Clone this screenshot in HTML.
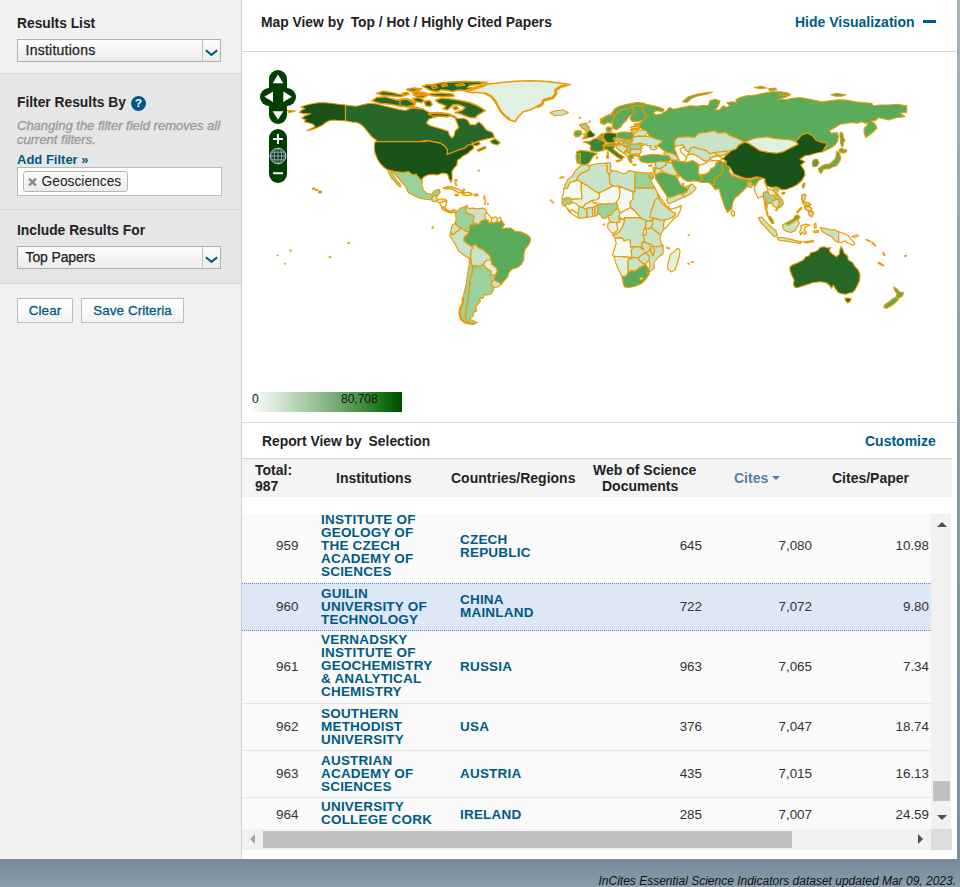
<!DOCTYPE html>
<html lang="en">
<head>
<meta charset="utf-8">
<title>InCites Essential Science Indicators</title>
<style>
html,body{margin:0;padding:0;}
body{width:960px;height:887px;overflow:hidden;position:relative;font-family:"Liberation Sans",Arial,sans-serif;font-size:14px;color:#222;
 background:linear-gradient(to bottom,#a8b3ba 0px,#8c9ba5 430px,#7b909e 858px,#76899a 861px,#8c9eaa 887px);}
.abs{position:absolute;}
#page{position:absolute;left:0;top:0;width:957px;height:859px;background:#fff;}
#side{position:absolute;left:0;top:0;width:242px;height:859px;background:#f1f1f1;border-right:1px solid #cfcfcf;box-sizing:border-box;z-index:2;}
.sec{position:absolute;left:0;width:241px;box-sizing:border-box;}
.h{position:absolute;left:17px;font-weight:bold;font-size:13.8px;color:#222;white-space:nowrap;}
.sel{position:absolute;left:17px;width:204px;height:23px;box-sizing:border-box;border:1px solid #b0b0b0;background:linear-gradient(#fdfdfd,#ececec);font-size:14px;line-height:21px;padding-left:7.5px;color:#222;letter-spacing:0.25px;-webkit-text-stroke:0.25px #222;}
.sel .arr{position:absolute;right:0;top:0;width:17px;height:21px;border-left:1px solid #c0c0c0;}
.btn{position:absolute;height:25px;box-sizing:border-box;border:1px solid #bdbdbd;background:linear-gradient(#ffffff,#f3f3f3);color:#005a84;font-size:13.4px;line-height:24px;text-align:center;-webkit-text-stroke:0.3px #005a84;letter-spacing:0.1px;}
a,.lnk{color:#005a84;text-decoration:none;}
#main{position:absolute;left:241px;top:0;width:716px;height:858px;background:#fff;}
.title{position:absolute;font-weight:bold;font-size:13.85px;color:#222;white-space:nowrap;}
.title span{margin-left:3px;}
.th{position:absolute;font-size:14px;color:#222;font-weight:bold;white-space:nowrap;line-height:16px;}
.row{position:absolute;left:1px;width:689px;background:#fafafa;border-bottom:1px solid #e6e6e6;box-sizing:border-box;}
.row.hl{background:#dde7f6;border-top:1px dotted #4f8fd0;border-bottom:1px dotted #4f8fd0;}
.num{position:absolute;font-size:13.4px;color:#333;white-space:nowrap;line-height:16px;}
.inst{position:absolute;left:80px;font-weight:bold;font-size:13.5px;line-height:13px;color:#005a84;white-space:nowrap;letter-spacing:0.2px;}
.ctry{position:absolute;left:219px;font-weight:bold;font-size:13.5px;line-height:13px;color:#005a84;white-space:nowrap;letter-spacing:0.2px;}
</style>
</head>
<body>
<div id="page">
 <div id="side">
  <div class="sec" style="top:0;height:74px;border-bottom:1px solid #d6d6d6;"></div>
  <div class="h" style="top:16px;">Results List</div>
  <div class="sel" style="top:39px;">Institutions<span class="arr"><svg width="17" height="21" viewBox="0 0 17 21" style="display:block"><path d="M2.8 10.2 L8.5 14.8 L14.2 10.2" fill="none" stroke="#005a84" stroke-width="2.1"/></svg></span></div>

  <div class="sec" style="top:74px;height:136px;background:#e6e6e6;border-bottom:1px solid #d4d4d4;"></div>
  <div class="h" style="top:95px;">Filter Results By</div>
  <div class="abs" style="left:131px;top:96px;width:15px;height:15px;border-radius:50%;background:#005a84;color:#fff;font-weight:bold;font-size:11.5px;line-height:15px;text-align:center;">?</div>
  <div class="abs" style="left:17px;top:119px;width:215px;font-style:italic;font-size:13px;line-height:14px;color:#9a9a9a;-webkit-text-stroke:0.35px #9a9a9a;">Changing the filter field removes all current filters.</div>
  <div class="abs lnk" style="left:17px;top:152px;font-weight:bold;font-size:13px;white-space:nowrap;">Add Filter »</div>
  <div class="abs" style="left:17px;top:167px;width:205px;height:29px;box-sizing:border-box;border:1px solid #b9b9b9;background:#fff;"></div>
  <div class="abs" style="left:23px;top:171px;width:105px;height:21px;box-sizing:border-box;border:1px solid #b5b5b5;border-radius:3px;background:linear-gradient(#fbfbfb,#ececec);font-size:13.8px;line-height:19px;color:#222;white-space:nowrap;"><span style="position:absolute;left:4px;top:0;color:#888;font-weight:bold;font-size:15px;-webkit-text-stroke:0.6px #888;">×</span><span style="position:absolute;left:17.5px;top:0;">Geosciences</span></div>

  <div class="sec" style="top:210px;height:74px;background:#e6e6e6;border-bottom:1px solid #d4d4d4;"></div>
  <div class="h" style="top:223px;">Include Results For</div>
  <div class="sel" style="top:246px;letter-spacing:-0.12px;">Top Papers<span class="arr"><svg width="17" height="21" viewBox="0 0 17 21" style="display:block"><path d="M2.8 10.2 L8.5 14.8 L14.2 10.2" fill="none" stroke="#005a84" stroke-width="2.1"/></svg></span></div>

  <div class="btn" style="left:17px;top:298px;width:56px;">Clear</div>
  <div class="btn" style="left:81px;top:298px;width:103px;">Save Criteria</div>
 </div>

 <div id="main">
  <div class="title" style="left:20px;top:14px;">Map View by <span>Top / Hot / Highly Cited Papers</span></div>
  <div class="abs lnk" style="left:554px;top:14px;font-weight:bold;font-size:14px;white-space:nowrap;">Hide Visualization</div>
  <div class="abs" style="left:682px;top:20px;width:13px;height:3px;background:#005a84;"></div>
  <div class="abs" style="left:1px;top:51px;width:715px;height:1px;background:#d4d4d4;"></div>

  <!-- MAP -->
  <div id="map" class="abs" style="left:0;top:52px;width:716px;height:370px;">
<svg width="716" height="370" viewBox="0 0 716 370" style="position:absolute;left:0;top:0;">
<g stroke="#ee9900" stroke-width="1.15" stroke-linejoin="round">
<path fill="#1a5319" d="M104.5 53.0 L97.3 52.2 L90.7 51.3 L84.8 50.8 L79.0 50.5 L74.0 51.3 L69.0 52.2 L64.8 53.3 L59.8 55.0 L64.0 56.7 L60.7 58.0 L58.2 60.5 L63.2 61.7 L69.8 61.7 L64.0 63.8 L60.7 66.3 L64.8 67.7 L63.2 69.7 L68.2 71.0 L72.3 72.2 L74.0 74.7 L69.8 76.7 L65.7 78.8 L70.7 77.7 L76.5 75.5 L81.5 73.0 L84.8 70.5 L88.2 68.8 L92.3 68.0 L97.3 68.5 L102.3 68.8 L104.5 68.8Z"/>
<path fill="#276727" d="M104.5 53.0 L109.8 53.7 L115.7 54.2 L122.3 52.5 L129.0 51.3 L135.7 52.0 L142.3 53.7 L149.0 55.3 L157.3 57.2 L164.0 58.5 L169.0 56.7 L175.7 55.0 L182.3 57.3 L166.5 55.5 L174.0 55.0 L181.5 56.8 L185.9 59.2 L190.2 61.1 L196.5 60.2 L202.8 61.1 L209.0 62.0 L214.0 64.5 L216.5 66.8 L222.1 66.1 L226.5 68.0 L229.0 72.4 L234.0 73.0 L237.8 69.9 L241.5 73.0 L245.2 78.0 L251.5 80.5 L253.4 85.5 L246.5 86.8 L239.0 88.6 L234.0 90.5 L230.2 90.9 L232.8 91.4 L237.8 89.9 L239.2 92.0 L235.2 94.0 L231.5 92.5 L227.1 93.0 L224.0 96.1 L217.8 98.0 L211.5 100.5 L205.9 102.4 L206.5 98.0 L204.0 94.2 L199.0 91.1 L192.8 89.9 L185.2 88.6 L179.0 89.2 L185.7 89.7 L136.5 89.3 L134.0 87.2 L130.7 84.7 L127.3 80.5 L124.0 76.3 L119.8 72.2 L115.7 70.5 L110.7 70.0 L104.5 68.8Z"/>
<path fill="#ffffff" d="M185.9 69.9 L188.4 66.8 L195.2 64.9 L201.5 63.0 L209.0 63.6 L214.0 66.1 L215.9 70.5 L217.8 75.5 L214.0 79.2 L213.4 83.0 L210.9 86.1 L208.4 83.0 L207.1 79.2 L201.5 77.4 L195.2 75.5 L189.0 73.6 L185.9 71.8Z"/>
<path fill="#276727" d="M249.0 89.2 L254.0 86.8 L259.0 90.5 L256.5 93.0 L251.5 91.8Z M235.9 98.0 L240.2 96.1 L244.0 94.5 L244.9 96.1 L237.8 99.2Z"/>
<path fill="#276727" stroke-width="1.45" d="M130.7 48.8 L135.7 45.5 L144.0 44.7 L149.0 46.3 L155.7 48.0 L165.7 47.2 L172.3 50.5 L173.2 53.3 L165.7 54.7 L157.3 53.8 L149.0 52.2 L139.0 51.3Z M135.7 41.3 L142.3 39.3 L150.7 40.5 L157.3 42.2 L165.7 43.0 L159.0 44.7 L149.0 43.8 L140.7 43.0Z M165.7 37.7 L172.3 36.0 L180.7 36.7 L177.3 38.8 L169.0 39.3Z M172.3 43.0 L180.7 41.3 L187.3 43.0 L182.3 45.5 L175.7 45.0Z M159.0 47.4 L164.0 46.5 L170.2 48.0 L174.6 51.1 L172.8 54.2 L166.5 55.2 L162.8 54.0 L159.0 54.5Z M171.5 46.5 L177.8 45.5 L182.8 47.8 L180.9 50.8 L174.6 49.5Z M183.4 49.2 L189.0 48.6 L191.2 52.4 L189.0 54.5 L184.6 53.6Z M166.5 36.8 L172.8 36.2 L177.8 37.8 L174.6 39.5 L167.8 38.8Z M161.5 41.1 L166.5 40.5 L167.8 42.4 L162.8 43.0Z M171.5 40.8 L179.0 40.0 L186.2 41.2 L183.4 43.2 L175.2 43.2Z"/>
<path fill="#276727" stroke-width="1.5" d="M181.5 34.2 L185.9 32.8 L191.5 33.0 L196.5 31.5 L202.8 30.5 L211.5 30.0 L224.0 29.5 L236.5 29.8 L246.5 30.5 L241.5 31.5 L239.0 32.5 L229.0 33.2 L226.5 35.5 L239.0 36.5 L234.0 38.0 L224.0 38.6 L217.8 38.0 L211.5 39.5 L206.5 38.5 L200.2 37.8 L196.5 39.5 L190.2 38.8 L186.5 36.8Z M187.8 41.8 L200.2 40.9 L211.5 42.0 L213.4 44.0 L201.5 44.5 L190.2 43.8Z M194.6 48.0 L200.2 46.2 L206.5 46.5 L212.8 47.5 L217.8 48.2 L224.0 49.5 L229.0 50.8 L235.2 53.2 L240.2 55.8 L244.2 58.6 L240.2 61.1 L235.9 63.6 L234.6 65.8 L229.0 65.5 L224.0 63.8 L219.0 61.8 L214.0 60.8 L217.8 59.2 L221.5 58.0 L224.0 55.5 L220.2 53.6 L215.2 52.4 L211.5 53.0 L209.0 55.5 L206.5 57.8 L202.1 57.0 L205.0 54.2 L201.5 52.4 L197.1 50.8Z M187.1 62.0 L191.5 60.9 L199.0 61.5 L206.5 62.0 L210.5 63.6 L206.5 64.8 L199.0 64.2 L191.5 63.9Z M211.5 55.5 L215.2 54.5 L217.8 56.5 L214.0 57.8Z"/>
<path fill="#276727" stroke-width="1.3" d="M200.2 33.0 L205.2 32.0 L206.5 33.6 L201.5 34.5Z M214.0 32.8 L221.5 31.5 L224.0 33.0 L216.5 34.2Z M190.2 34.9 L195.2 34.0 L196.5 35.8 L191.8 36.5Z"/>
<path fill="#e0f1df" stroke-width="1.6" d="M224.0 38.8 L235.7 34.7 L245.7 32.2 L260.7 30.5 L274.0 29.3 L289.0 28.8 L302.3 29.3 L314.0 30.5 L329.0 32.5 L319.0 34.7 L314.0 38.0 L314.8 41.3 L311.5 45.5 L302.3 48.0 L300.7 52.2 L295.7 54.7 L289.0 58.0 L282.3 59.7 L277.3 64.7 L274.0 69.7 L269.0 68.0 L264.8 64.7 L259.8 59.7 L256.5 53.8 L254.0 48.8 L249.8 43.8 L244.0 41.3 L235.7 40.5 L229.0 40.5Z"/>
<path fill="#c4e4cc" d="M309.0 60.5 L314.0 58.8 L322.3 58.0 L327.3 60.5 L322.3 63.0 L314.0 63.8Z"/>
<path fill="#1a5319" d="M134.0 89.7 L184.8 89.7 L185.2 88.6 L192.8 89.9 L199.0 91.1 L204.0 94.2 L206.5 98.0 L205.9 102.4 L211.5 100.5 L217.8 98.0 L224.0 96.1 L227.1 93.0 L231.5 92.5 L233.0 96.1 L229.0 99.2 L226.5 101.8 L221.5 104.2 L219.0 106.8 L216.5 108.0 L215.9 113.0 L213.0 116.1 L210.9 119.2 L211.0 123.0 L211.2 126.8 L210.0 130.5 L208.0 126.5 L206.8 122.4 L205.2 121.5 L201.5 121.1 L196.5 123.0 L191.5 122.4 L186.5 123.0 L182.8 124.9 L180.2 128.0 L181.5 128.0 L179.0 127.2 L174.8 122.2 L171.5 123.0 L167.3 119.7 L162.3 120.5 L154.0 119.7 L146.5 117.7 L143.2 115.5 L139.0 111.3 L136.5 107.2 L134.0 101.3 L133.2 94.7Z"/>
<path fill="#9bd19b" d="M150.7 118.7 L154.0 119.7 L162.3 120.5 L167.3 119.7 L171.5 123.0 L174.8 122.2 L179.0 127.2 L181.5 128.0 L180.7 133.0 L182.3 138.0 L185.7 141.3 L190.7 142.2 L193.2 138.8 L198.2 137.2 L199.3 140.5 L196.5 143.8 L194.8 146.7 L191.5 145.5 L190.7 148.0 L184.0 147.2 L179.0 146.3 L173.2 143.8 L167.3 140.5 L164.8 134.7 L159.0 128.0 L154.0 122.2Z M146.5 117.7 L149.8 118.5 L152.3 123.0 L155.7 128.0 L159.0 132.2 L159.8 135.0 L157.3 133.8 L154.0 129.7 L150.7 126.3 L148.2 121.7Z"/>
<path fill="#c7e3c8" stroke-width="1.3" d="M190.7 145.5 L192.8 143.8 L195.7 143.0 L195.5 146.3 L196.9 148.0 L194.0 149.8 L191.5 149.0Z"/>
<path fill="#e0f1df" stroke-width="1.3" d="M196.1 149.2 L196.9 148.0 L199.0 147.2 L204.0 147.2 L205.8 148.8 L201.5 149.7 L199.0 151.3 L197.3 150.3Z"/>
<path fill="#f3faf2" stroke-width="1.3" d="M199.0 151.3 L201.5 149.7 L205.8 149.0 L205.0 153.0 L203.8 155.7 L200.7 154.8 L199.4 152.6Z"/>
<path fill="#c7e3c8" stroke-width="1.5" d="M200.7 155.1 L203.8 155.9 L205.8 158.0 L209.0 159.2 L211.1 158.8 L213.2 157.8 L215.8 159.5 L214.7 161.3 L212.3 159.8 L210.2 160.9 L207.3 160.2 L204.0 158.6 L201.1 156.9Z"/>
<path fill="#f3faf2" stroke-width="1.5" d="M202.3 136.3 L206.5 134.7 L211.5 135.1 L215.7 136.8 L219.8 138.4 L222.5 139.7 L219.8 140.7 L216.5 140.2 L214.0 138.5 L210.7 136.8 L205.7 136.8Z M221.1 142.2 L224.0 140.5 L228.2 140.5 L231.2 142.2 L229.0 143.2 L225.7 143.5 L222.3 143.0Z M214.0 142.6 L216.9 142.5 L217.3 143.5 L214.4 143.5Z M233.2 142.6 L236.5 142.3 L236.9 143.4 L233.6 143.5Z"/>
<path fill="#f3faf2" stroke-width="1.2" d="M213.6 127.8 L216.1 127.8 L215.8 129.2 L213.8 129.2Z M214.0 130.9 L215.0 130.9 L215.7 133.4 L214.7 133.4Z M222.3 137.3 L223.6 137.3 L223.6 138.4 L222.3 138.4Z M242.8 144.2 L243.7 144.2 L243.7 145.2 L242.8 145.2Z M243.2 146.3 L244.0 146.3 L244.0 147.3 L243.2 147.3Z M244.0 148.8 L244.8 148.8 L244.8 149.8 L244.0 149.8Z M243.6 151.3 L244.5 151.3 L244.5 152.2 L243.6 152.2Z M246.5 151.3 L247.3 151.3 L247.3 152.2 L246.5 152.2Z M191.1 174.9 L192.2 174.9 L192.2 176.1 L191.1 176.1Z M237.3 118.4 L238.3 118.4 L238.3 119.0 L237.3 119.0Z"/>
<path fill="#9bd19b" d="M215.2 160.5 L219.6 156.1 L224.0 154.9 L225.9 153.6 L224.6 156.8 L225.9 161.1 L231.5 163.0 L233.4 164.9 L232.1 168.6 L232.8 173.0 L229.0 173.0 L228.4 179.2 L225.9 179.9 L223.4 178.0 L219.6 176.1 L215.2 173.0 L214.0 171.1 L215.2 166.8 L214.6 163.0Z"/>
<path fill="#c7e3c8" d="M225.9 153.6 L227.8 156.8 L231.5 156.1 L236.5 156.8 L241.5 156.1 L244.6 157.4 L245.9 160.5 L244.0 163.0 L244.6 167.4 L240.2 169.2 L237.1 173.0 L234.6 171.1 L232.8 173.0 L232.1 168.6 L233.4 164.9 L231.5 163.0 L225.9 161.1 L224.6 156.8Z"/>
<path fill="#f3faf2" d="M245.9 160.5 L248.4 163.6 L250.9 166.1 L250.2 169.9 L248.4 171.8 L247.1 168.6 L244.6 167.4 L244.0 163.0Z"/>
<path fill="#e0f1df" d="M250.9 166.1 L254.6 164.9 L256.5 166.8 L255.9 169.9 L252.1 171.1 L250.2 169.9Z"/>
<path fill="#f3faf2" d="M256.5 166.8 L259.0 165.2 L260.5 168.0 L258.4 170.5 L255.9 169.9Z"/>
<path fill="#c7e3c8" d="M210.9 173.6 L214.0 171.1 L215.2 173.0 L219.6 176.1 L217.8 178.6 L214.6 180.5 L212.1 183.0 L209.6 180.5Z"/>
<path fill="#c7e3c8" d="M209.6 180.5 L212.1 183.0 L214.6 180.5 L217.8 178.6 L219.6 176.1 L223.4 178.0 L225.9 179.9 L228.4 179.2 L227.1 181.8 L223.4 184.9 L222.8 188.6 L226.5 191.8 L230.2 194.2 L232.1 195.5 L230.2 198.0 L229.6 205.5 L227.8 206.1 L222.8 203.0 L217.8 199.2 L214.6 193.0 L211.5 188.0 L209.0 183.6Z"/>
<path fill="#c7e3c8" d="M230.2 194.2 L234.6 192.4 L237.1 195.5 L242.8 198.0 L245.9 201.1 L249.0 203.6 L250.2 208.0 L245.2 208.6 L242.1 212.4 L239.0 214.2 L234.0 213.6 L232.1 215.5 L230.2 211.1 L229.6 205.5 L230.2 198.0 L232.1 195.5Z"/>
<path fill="#e0f1df" d="M242.1 212.4 L245.2 208.6 L250.2 208.0 L250.9 212.4 L255.2 215.5 L256.5 219.2 L254.6 223.0 L249.6 223.0 L250.2 219.2 L245.9 216.8Z"/>
<path fill="#5aab5a" d="M237.1 173.0 L240.2 169.2 L244.6 167.4 L247.1 168.6 L248.4 171.8 L250.2 169.9 L252.1 171.1 L255.9 169.9 L258.4 170.5 L260.5 168.0 L261.5 169.9 L263.4 172.4 L260.9 176.8 L265.2 176.1 L270.2 176.1 L274.0 179.2 L280.2 179.9 L286.5 183.0 L289.6 186.1 L289.0 190.5 L286.5 194.2 L284.0 197.4 L282.8 203.0 L282.8 208.0 L280.2 212.4 L276.5 215.5 L271.5 216.8 L267.8 220.5 L266.5 224.9 L262.8 229.2 L260.2 232.4 L257.8 230.5 L252.8 228.0 L254.6 223.0 L256.5 219.2 L255.2 215.5 L250.9 212.4 L250.2 208.0 L249.0 203.6 L245.9 201.1 L242.8 198.0 L237.1 195.5 L234.6 192.4 L230.2 194.2 L226.5 191.8 L222.8 188.6 L223.4 184.9 L227.1 181.8 L228.4 179.2 L229.0 173.0 L232.8 173.0 L234.6 171.1Z"/>
<path fill="#c7e3c8" d="M252.8 228.0 L257.8 230.5 L260.2 232.4 L257.1 234.9 L252.8 235.5 L250.2 232.4 L250.9 229.2Z"/>
<path fill="#9bd19b" d="M232.1 215.5 L234.0 213.6 L239.0 214.2 L242.1 212.4 L245.9 216.8 L250.2 219.2 L249.6 223.0 L254.6 223.0 L252.8 228.0 L250.9 229.2 L250.2 232.4 L252.8 235.5 L252.1 238.6 L250.2 241.8 L246.5 243.0 L242.8 243.0 L242.1 246.1 L237.8 246.8 L239.6 249.2 L236.5 252.4 L234.6 255.5 L235.9 258.6 L232.8 260.5 L232.1 264.2 L229.0 265.5 L230.2 268.0 L236.5 270.5 L232.8 272.0 L228.4 271.1 L225.9 268.6 L224.0 264.2 L225.2 259.2 L225.9 253.0 L227.1 246.8 L227.8 240.5 L228.4 234.2 L229.0 228.0 L230.9 221.8 L231.5 218.0Z"/>
<path fill="#9bd19b" d="M229.6 205.5 L230.2 210.5 L232.1 215.5 L231.5 218.0 L230.9 221.8 L229.0 228.0 L228.4 234.2 L227.8 240.5 L227.1 246.8 L225.9 253.0 L225.2 259.2 L224.0 264.2 L225.9 268.6 L228.4 271.1 L224.0 270.5 L220.2 267.4 L218.4 261.8 L219.0 256.8 L221.5 251.8 L222.1 245.5 L223.4 239.2 L225.2 233.0 L225.9 226.8 L227.1 219.2 L228.4 211.8 L228.4 205.5Z"/>
<path fill="#c7e3c8" d="M340.9 112.4 L337.8 115.5 L334.0 119.2 L331.5 123.6 L327.1 127.4 L324.6 131.8 L322.8 136.8 L326.5 136.1 L329.0 130.5 L335.9 128.6 L336.5 124.9 L339.6 121.8 L344.0 119.9 L347.8 118.0 L348.4 113.6 L345.2 112.8Z"/>
<path fill="#f3faf2" d="M322.8 137.0 L326.5 136.2 L329.2 130.2 L335.9 128.8 L336.2 127.8 L340.5 130.8 L340.2 135.5 L341.0 146.8 L330.2 147.4 L327.8 145.5 L324.6 146.1 L321.5 148.0 L320.9 145.5 L322.5 141.8Z"/>
<path fill="#c7e3c8" d="M348.4 113.6 L355.2 111.8 L365.2 111.1 L366.5 115.5 L365.9 119.2 L368.4 123.0 L369.0 131.8 L372.1 134.2 L358.4 141.1 L355.2 139.9 L345.9 133.6 L336.2 127.8 L336.5 124.9 L339.6 121.8 L344.0 119.9 L347.8 118.0Z"/>
<path fill="#c7e3c8" d="M365.2 111.1 L369.0 110.5 L370.2 114.2 L369.0 116.8 L370.5 118.6 L368.4 123.0 L365.9 119.2 L366.5 115.5Z"/>
<path fill="#c7e3c8" d="M370.5 118.6 L376.5 119.2 L381.5 121.8 L385.2 121.1 L387.8 118.6 L394.0 119.9 L394.0 139.9 L392.1 139.9 L377.8 134.2 L372.1 134.2 L369.0 131.8 L368.4 123.0Z"/>
<path fill="#9bd19b" d="M394.0 119.9 L400.2 120.5 L406.5 121.1 L410.9 120.5 L412.8 124.9 L410.9 127.4 L409.0 123.6 L407.8 123.0 L410.2 129.2 L414.0 136.1 L394.6 136.1 L394.0 136.1Z"/>
<path fill="#e0f1df" d="M340.5 130.8 L345.9 133.6 L355.2 139.9 L358.4 141.1 L358.4 146.1 L355.2 148.0 L350.2 148.6 L347.8 150.5 L344.6 151.8 L342.1 155.5 L338.4 154.9 L335.2 151.8 L330.9 150.5 L330.2 147.4 L341.0 146.8 L340.2 135.5Z"/>
<path fill="#f3faf2" d="M358.4 141.1 L372.1 134.2 L377.8 134.2 L379.0 139.2 L378.4 145.5 L375.2 150.5 L372.8 151.8 L367.8 151.8 L362.8 152.4 L358.4 151.8 L357.1 153.0 L355.2 150.5 L352.8 151.1 L350.2 148.6 L355.2 148.0 L358.4 146.1Z"/>
<path fill="#f3faf2" d="M377.8 134.2 L392.1 139.9 L392.1 146.8 L389.0 150.5 L389.6 155.5 L385.2 158.0 L379.0 161.1 L377.1 156.8 L376.5 153.0 L375.2 150.5 L378.4 145.5 L379.0 139.2Z"/>
<path fill="#c7e3c8" d="M394.0 136.1 L414.0 136.1 L416.5 141.1 L417.8 145.5 L414.0 148.0 L412.8 153.0 L410.2 159.2 L412.1 164.9 L410.9 169.0 L405.2 168.8 L404.0 168.0 L400.2 166.1 L396.5 162.4 L394.0 159.2 L389.6 155.5 L389.0 150.5 L392.1 146.8 L392.1 139.9 L394.0 139.9Z"/>
<path fill="#9bd19b" stroke-width="1.27" d="M321.5 148.0 L324.6 146.1 L327.8 145.5 L330.2 147.4 L330.9 150.5 L329.0 152.0 L324.6 152.4 L324.6 154.2 L322.1 153.6 L320.9 150.5Z"/>
<path fill="#f3faf2" d="M324.6 154.2 L324.6 152.4 L329.0 152.0 L330.9 150.5 L335.2 151.8 L338.4 154.9 L337.8 158.0 L337.1 161.8 L334.6 160.5 L331.5 158.0 L329.0 159.2 L326.5 156.8Z"/>
<path fill="#ffffff" d="M326.5 156.8 L329.0 159.2 L331.5 158.0 L334.6 160.5 L337.1 161.8 L337.8 166.1 L334.6 164.2 L330.9 161.8 L327.8 159.2Z"/>
<path fill="#c7e3c8" d="M337.8 158.0 L338.4 154.9 L342.1 155.5 L345.2 157.4 L346.2 160.5 L345.9 165.1 L340.9 166.1 L337.8 166.1 L337.1 161.8Z"/>
<path fill="#e0f1df" d="M342.1 155.5 L344.6 151.8 L347.8 150.5 L350.2 148.6 L352.8 151.1 L355.2 150.5 L357.1 153.0 L354.0 154.9 L351.5 155.5 L346.5 156.1 L345.2 157.4Z"/>
<path fill="#c7e3c8" d="M345.2 157.4 L346.5 156.1 L351.5 155.5 L351.9 164.2 L346.2 165.5 L346.2 160.5Z"/>
<path fill="#e0f1df" d="M351.5 155.5 L354.0 154.9 L353.8 164.0 L351.9 164.2Z"/>
<path fill="#c7e3c8" d="M354.0 154.9 L357.1 153.0 L356.5 161.8 L355.9 163.6 L353.8 164.0Z"/>
<path fill="#9bd19b" d="M357.1 153.0 L358.4 151.8 L362.8 152.4 L367.8 151.8 L372.8 151.8 L375.2 150.5 L376.5 153.0 L375.9 156.8 L372.8 159.2 L370.2 163.0 L367.1 163.6 L365.2 166.1 L361.5 166.1 L359.6 163.0 L356.5 161.8Z"/>
<path fill="#c7e3c8" d="M372.8 159.2 L375.9 156.8 L377.1 156.8 L379.0 161.1 L377.8 165.5 L379.0 169.9 L374.0 170.5 L369.0 169.9 L367.8 167.4 L367.1 163.6 L370.2 163.0Z"/>
<path fill="#f3faf2" d="M379.0 161.1 L385.2 158.0 L389.6 155.5 L394.0 159.2 L396.5 162.4 L400.2 166.1 L394.0 165.5 L389.0 166.1 L384.0 165.5 L381.5 168.0 L379.0 169.9 L377.8 165.5Z"/>
<path fill="#e0f1df" d="M366.5 175.5 L367.1 171.1 L369.6 170.5 L375.9 170.5 L376.8 178.0 L372.8 181.1 L370.2 180.5Z"/>
<path fill="#f3faf2" d="M375.9 170.5 L379.0 169.9 L379.0 165.5 L381.5 168.0 L384.0 165.5 L383.4 169.2 L382.1 173.0 L379.0 179.2 L374.0 182.4 L371.5 183.0 L372.8 181.1 L376.8 178.0Z"/>
<path fill="#c7e3c8" d="M384.0 165.5 L389.0 166.1 L394.0 165.5 L400.2 166.1 L404.0 168.0 L405.2 168.6 L404.6 174.2 L402.8 178.0 L402.1 183.0 L403.4 188.0 L400.9 191.1 L401.5 195.5 L403.4 198.0 L400.2 196.8 L399.6 194.9 L392.8 194.9 L389.6 195.5 L389.0 188.0 L385.2 188.0 L383.4 189.2 L380.9 186.1 L374.0 186.1 L371.5 183.0 L374.0 182.4 L379.0 179.2 L382.1 173.0 L383.4 169.2Z"/>
<path fill="#f3faf2" d="M374.0 186.1 L380.9 186.1 L383.4 189.2 L385.2 188.0 L389.0 188.0 L389.6 195.5 L392.8 194.9 L390.2 198.0 L390.9 205.5 L384.0 204.9 L372.8 204.2 L371.5 203.0 L373.4 196.8 L375.2 191.8Z"/>
<path fill="#c7e3c8" d="M390.2 198.0 L392.8 194.9 L399.6 194.9 L400.2 196.8 L403.4 198.0 L401.5 195.5 L400.9 191.1 L403.4 189.9 L407.8 191.8 L409.6 195.5 L407.8 199.2 L404.0 201.1 L400.9 203.0 L397.1 206.1 L391.5 205.5 L390.9 205.5Z"/>
<path fill="#c7e3c8" d="M405.2 168.6 L410.9 169.2 L412.1 171.8 L410.2 175.5 L407.8 176.8 L404.6 176.1 L404.6 174.2Z"/>
<path fill="#f3faf2" d="M402.8 178.0 L404.6 176.1 L405.5 179.2 L405.0 183.0 L403.0 183.0 L402.1 183.0Z"/>
<path fill="#c7e3c8" d="M410.9 169.2 L414.0 166.1 L419.0 168.0 L424.0 168.0 L422.5 171.8 L422.8 176.8 L419.6 183.0 L411.5 176.8 L410.2 175.5 L412.1 171.8Z"/>
<path fill="#c7e3c8" d="M404.6 176.1 L407.8 176.8 L410.2 175.5 L411.5 176.8 L419.6 183.0 L419.0 186.8 L420.2 191.1 L422.1 193.6 L416.5 194.9 L412.1 194.2 L409.6 191.8 L407.8 191.8 L403.4 189.9 L403.4 188.0 L402.1 183.0 L405.0 183.0 L405.5 179.2Z"/>
<path fill="#c7e3c8" d="M414.0 148.0 L417.8 145.5 L420.2 150.5 L424.0 153.6 L426.5 156.1 L425.9 155.5 L428.4 157.4 L430.2 159.2 L435.2 161.8 L431.5 165.5 L424.0 168.0 L419.0 168.0 L414.0 166.1 L408.8 165.5 L410.2 159.2 L412.8 153.0Z"/>
<path fill="#f3faf2" d="M416.5 141.1 L420.2 146.8 L424.0 151.8 L425.9 155.5 L427.8 154.0 L428.6 157.4 L425.9 155.8 L424.0 153.6 L420.2 150.5 L417.8 145.5Z"/>
<path fill="#f3faf2" d="M428.6 157.4 L434.0 156.1 L440.2 153.6 L439.6 158.0 L436.5 164.2 L434.0 165.5 L429.0 171.1 L424.0 176.8 L422.8 176.8 L422.5 171.8 L424.0 168.0 L431.5 165.5 L435.2 161.8 L430.2 159.2Z"/>
<path fill="#c7e3c8" d="M416.5 194.9 L422.1 193.6 L422.1 201.8 L416.5 206.1 L412.8 210.5 L413.4 216.1 L409.0 219.2 L407.8 218.0 L409.0 213.0 L407.8 208.0 L408.4 204.2 L404.0 201.1 L407.8 199.2 L409.6 195.5 L410.2 200.5 L412.1 203.6 L413.4 199.2 L412.1 194.2Z"/>
<path fill="#c7e3c8" d="M409.6 195.5 L410.9 193.6 L412.1 194.2 L413.4 199.2 L412.1 203.6 L410.2 200.5Z"/>
<path fill="#c7e3c8" d="M397.1 206.1 L400.9 203.0 L404.0 201.1 L408.4 204.2 L407.8 208.0 L404.6 212.4 L401.5 211.1 L399.0 209.2Z"/>
<path fill="#c7e3c8" d="M387.1 207.4 L391.5 205.5 L397.1 206.1 L399.0 209.2 L401.5 211.1 L404.6 212.4 L401.5 214.2 L397.8 216.1 L394.0 219.2 L390.2 218.6 L387.1 220.5 L386.8 211.8Z"/>
<path fill="#e0f1df" d="M372.8 204.2 L384.0 204.9 L390.9 205.5 L391.5 205.5 L387.1 207.4 L386.8 211.8 L387.1 220.5 L385.2 224.2 L380.9 224.2 L377.1 216.8 L374.6 210.5Z"/>
<path fill="#5aab5a" d="M380.9 224.2 L385.2 224.2 L387.1 220.5 L390.2 218.6 L394.0 219.2 L397.8 216.1 L401.5 214.2 L404.6 212.4 L406.5 215.5 L407.8 218.0 L409.0 219.2 L407.8 223.0 L404.0 228.0 L400.2 231.8 L394.0 234.2 L387.8 235.5 L383.4 234.9 L382.1 230.5Z"/>
<path fill="#ffffff" stroke-width="1.23" d="M398.8 226.1 L400.5 225.0 L402.2 226.1 L401.2 227.8 L399.2 227.8Z M405.8 220.5 L407.0 220.0 L407.5 221.5 L406.2 222.2Z"/>
<path fill="#e0f1df" d="M436.5 196.1 L439.0 198.0 L438.4 204.2 L436.5 210.5 L434.0 218.0 L430.2 219.9 L427.1 217.4 L426.5 213.0 L428.4 206.8 L429.0 203.0 L432.8 199.9Z"/>
<path fill="#5aab5a" stroke-width="1.23" d="M359.7 67.2 L364.4 64.6 L370.7 62.0 L373.8 56.8 L379.0 54.1 L387.3 52.1 L395.7 50.5 L401.9 51.0 L406.1 52.6 L401.9 53.6 L395.7 53.6 L391.5 54.7 L387.3 56.2 L381.1 57.8 L376.9 60.4 L373.8 63.0 L372.2 68.2 L370.1 71.3 L366.5 70.3 L363.4 72.4 L360.2 71.3Z"/>
<path fill="#5aab5a" stroke-width="1.18" d="M373.8 63.0 L376.9 60.4 L381.1 57.8 L387.3 56.2 L391.5 54.7 L393.6 58.8 L393.8 61.1 L388.2 64.0 L385.7 68.0 L381.6 71.9 L380.0 74.7 L375.9 77.6 L371.9 76.5 L371.2 73.4 L371.2 71.3 L372.2 68.2Z"/>
<path fill="#5aab5a" stroke-width="1.18" d="M391.5 54.7 L395.7 53.6 L401.9 53.6 L400.9 56.2 L403.5 60.9 L406.1 65.1 L401.9 68.4 L395.7 69.5 L391.0 69.2 L388.9 66.6 L390.7 63.0 L393.8 60.9 L392.8 58.8Z"/>
<path fill="#9bd19b" stroke-width="1.23" d="M338.2 65.6 L339.2 65.3 L339.4 66.3 L338.4 66.5Z M348.3 69.2 L349.0 68.9 L349.1 70.3 L348.4 70.3Z"/>
<path fill="#5aab5a" stroke-width="1.27" d="M365.1 76.9 L367.2 74.8 L369.8 75.4 L371.0 77.9 L369.1 79.4 L366.0 79.4Z"/>
<path fill="#5aab5a" stroke-width="1.36" d="M332.9 82.2 L333.8 79.4 L337.2 78.5 L340.4 79.4 L340.7 81.9 L338.5 84.1 L334.8 84.8Z"/>
<path fill="#9bd19b" stroke-width="1.54" d="M338.5 72.9 L341.6 71.9 L346.0 71.3 L345.7 73.5 L347.9 74.8 L347.6 77.2 L349.1 78.5 L347.2 80.1 L345.1 79.4 L343.5 77.2 L341.6 76.6 L340.4 74.8Z"/>
<path fill="#9bd19b" stroke-width="1.36" d="M342.9 81.6 L345.7 81.3 L346.0 84.1 L343.2 84.4Z"/>
<path fill="#276727" stroke-width="1.0" d="M346.9 79.8 L349.1 78.2 L351.3 80.4 L354.0 82.4 L352.6 84.8 L349.1 85.5 L345.4 86.1 L341.3 86.9 L342.1 85.5 L345.8 84.8 L345.9 81.9Z"/>
<path fill="#38883a" stroke-width="1.18" d="M342.6 90.1 L345.4 89.4 L347.9 89.8 L349.8 88.8 L351.6 87.6 L354.1 86.6 L356.0 86.0 L358.5 87.6 L361.6 88.8 L364.8 90.1 L363.5 91.6 L361.9 93.2 L362.9 95.1 L362.2 97.2 L363.5 98.5 L360.4 98.8 L356.6 99.8 L352.9 99.4 L349.8 98.5 L349.1 96.6 L349.8 94.1 L347.9 92.2 L345.4 91.0Z"/>
<path fill="#5aab5a" stroke-width="1.3" d="M358.5 83.4 L361.0 81.6 L362.9 81.9 L362.4 84.8 L360.4 85.1Z M356.0 85.9 L358.5 84.1 L360.4 85.1 L362.4 84.8 L363.2 86.9 L361.0 87.6 L358.5 87.6Z M363.2 86.9 L364.8 90.1 L362.6 89.2 L361.6 87.9Z"/>
<path fill="#276727" stroke-width="1.18" d="M362.9 81.9 L364.8 81.0 L368.5 80.4 L371.6 81.0 L374.8 81.3 L375.7 83.5 L375.4 85.4 L372.2 86.6 L374.1 88.8 L372.9 90.7 L369.8 91.0 L366.6 90.7 L365.7 89.8 L364.8 90.1 L363.5 87.2 L362.2 84.8Z"/>
<path fill="#5aab5a" stroke-width="1.45" d="M362.6 92.9 L364.8 91.9 L367.2 92.2 L366.9 93.8 L364.1 94.1Z"/>
<path fill="#5aab5a" stroke-width="1.36" d="M367.2 92.2 L369.8 91.0 L372.9 90.7 L376.0 91.6 L378.5 90.1 L379.8 91.6 L377.9 92.9 L374.8 93.0 L372.2 94.1 L369.1 94.1 L366.9 93.8Z"/>
<path fill="#38883a" stroke-width="1.18" d="M362.6 95.2 L364.1 94.0 L366.9 93.6 L369.1 93.9 L372.6 93.9 L373.5 95.4 L371.9 96.6 L373.8 98.4 L376.3 100.4 L378.8 102.2 L381.0 103.8 L383.5 105.2 L381.3 106.3 L380.7 108.5 L378.8 106.6 L376.1 104.9 L373.5 103.0 L371.0 101.1 L368.5 99.2 L366.0 97.6 L363.5 97.1Z"/>
<path fill="#38883a" stroke-width="1.23" d="M365.7 103.5 L367.2 103.2 L367.6 106.0 L366.0 106.3Z M366.3 100.1 L367.2 99.8 L367.4 102.2 L366.4 102.2Z M375.1 108.5 L378.5 108.0 L379.1 109.1 L376.3 109.8Z"/>
<path fill="#38883a" stroke-width="1.18" d="M335.7 99.8 L339.1 98.5 L343.5 98.8 L347.2 99.4 L350.4 100.1 L354.8 101.3 L356.0 101.9 L352.9 103.5 L351.0 106.0 L349.8 108.5 L347.9 111.0 L345.4 112.6 L341.0 112.9 L339.1 111.6 L338.8 109.1 L339.4 104.8 L339.1 101.6 L335.4 101.9Z"/>
<path fill="#5aab5a" stroke-width="1.27" d="M335.4 101.9 L339.1 101.6 L339.4 104.8 L338.8 109.1 L339.1 111.6 L336.3 111.3 L335.1 106.0Z"/>
<path fill="#38883a" stroke-width="1.27" d="M355.4 105.1 L356.6 104.9 L356.8 106.0 L355.5 106.1Z"/>
<path fill="#5aab5a" stroke-width="1.18" d="M375.7 81.6 L376.9 81.0 L380.4 80.1 L385.4 80.1 L391.0 80.7 L392.2 82.9 L391.9 86.0 L389.8 87.6 L386.0 87.6 L382.2 86.9 L377.9 86.0 L375.4 85.4Z"/>
<path fill="#8fd2ae" stroke-width="1.27" d="M373.8 87.6 L375.4 85.4 L377.9 86.0 L382.2 86.9 L382.9 88.5 L381.6 89.2 L378.5 89.2 L374.8 89.0Z"/>
<path fill="#8fd2ae" stroke-width="1.27" d="M382.2 90.1 L382.9 88.5 L386.0 87.6 L389.8 87.6 L389.8 89.4 L389.1 91.0 L384.8 90.7Z"/>
<path fill="#8fd2ae" stroke-width="1.27" d="M380.4 92.6 L382.2 90.1 L384.8 90.7 L389.1 91.0 L389.8 92.2 L388.2 94.1 L386.6 94.0 L382.9 94.2Z"/>
<path fill="#c3e7d2" stroke-width="1.45" d="M374.8 93.0 L377.9 92.9 L380.4 92.6 L382.9 94.2 L385.4 95.1 L386.3 97.9 L384.4 99.1 L383.5 101.6 L380.4 99.8 L377.2 97.2 L375.4 95.4Z"/>
<path fill="#8fd2ae" stroke-width="1.36" d="M385.4 95.1 L386.6 94.0 L388.2 94.1 L389.8 97.9 L389.2 100.7 L387.4 100.5 L384.4 99.1 L386.3 97.9Z"/>
<path fill="#c3e7d2" stroke-width="1.45" d="M384.4 99.1 L387.4 100.5 L389.2 100.7 L389.8 102.6 L387.2 104.8 L385.4 103.5 L383.5 101.6Z"/>
<path fill="#8fd2ae" stroke-width="1.23" d="M388.2 94.1 L389.8 92.2 L394.8 92.2 L398.5 91.9 L400.4 93.5 L401.0 96.6 L398.5 97.2 L394.8 97.6 L391.0 97.2 L389.8 97.9Z"/>
<path fill="#ffffff" stroke-width="1.36" d="M398.5 91.0 L401.6 91.6 L401.9 93.5 L400.4 93.5 L398.5 91.9Z"/>
<path fill="#c3e7d2" stroke-width="1.23" d="M389.8 97.9 L391.0 97.2 L394.8 97.6 L398.5 97.2 L400.4 99.1 L399.1 101.3 L394.8 102.1 L389.8 102.6 L389.2 100.7Z"/>
<path fill="#5aab5a" stroke-width="1.36" d="M387.2 104.8 L389.8 102.6 L394.8 102.1 L396.0 103.5 L392.2 104.1 L392.6 106.0 L389.8 106.6 L391.0 109.8 L390.4 111.0 L388.5 109.8 L387.4 107.2Z"/>
<path fill="#5aab5a" stroke-width="1.27" d="M391.6 112.6 L394.1 112.2 L395.1 113.0 L392.2 113.2Z"/>
<path fill="#8fd2ae" stroke-width="1.36" d="M393.5 71.9 L398.5 71.3 L398.9 73.0 L394.1 73.4Z"/>
<path fill="#c3e7d2" stroke-width="1.36" d="M389.4 75.1 L394.8 74.1 L398.8 75.1 L398.5 76.8 L391.6 76.5Z"/>
<path fill="#c3e7d2" stroke-width="1.36" d="M389.8 77.6 L396.0 77.2 L396.8 79.4 L393.5 81.6 L391.6 79.9Z"/>
<path fill="#c3e7d2" stroke-width="1.23" d="M393.5 81.6 L397.2 78.5 L402.2 77.9 L405.1 78.5 L406.8 81.0 L405.1 82.6 L403.5 84.4 L397.9 84.1 L392.9 84.8 L392.2 82.9Z"/>
<path fill="#c3e7d2" stroke-width="1.18" d="M391.3 90.1 L391.9 86.0 L392.9 84.8 L397.9 84.1 L403.5 84.4 L408.5 84.1 L411.6 85.4 L416.0 87.2 L421.0 88.2 L420.4 90.7 L417.9 92.2 L417.1 94.0 L414.8 93.7 L414.0 95.2 L416.1 95.9 L415.8 97.2 L412.4 98.0 L409.9 97.0 L408.6 95.4 L409.9 94.1 L407.9 93.5 L406.0 93.9 L404.8 91.9 L401.9 93.5 L401.6 91.6 L398.5 91.0 L394.8 92.2 L389.8 92.2 L389.8 89.4 L389.8 87.6Z"/>
<path fill="#5aab5a" d="M406.0 52.5 L409.0 53.0 L417.3 55.0 L423.2 57.2 L421.5 59.7 L415.7 58.8 L412.3 60.5 L414.8 63.0 L420.7 61.7 L425.7 58.8 L428.2 55.5 L432.3 57.2 L440.7 55.5 L449.0 53.8 L455.7 54.3 L462.3 53.3 L467.3 53.8 L469.0 48.8 L474.0 47.2 L479.0 48.8 L477.3 53.8 L474.0 58.0 L478.2 58.0 L482.3 53.8 L485.7 55.5 L489.0 53.8 L485.7 50.5 L492.3 49.7 L495.7 51.3 L494.8 48.0 L499.0 45.5 L505.7 43.8 L514.0 43.0 L522.3 41.3 L530.7 39.7 L540.7 39.7 L549.0 43.0 L544.0 45.5 L535.7 47.7 L545.7 47.2 L552.3 46.3 L559.0 45.5 L572.3 48.0 L580.7 49.7 L589.0 48.8 L597.3 47.7 L605.7 48.0 L614.0 49.7 L622.3 50.5 L630.7 51.3 L632.3 53.8 L639.0 53.0 L647.3 53.0 L655.7 52.2 L665.7 53.8 L665.7 60.5 L659.0 61.0 L664.0 64.7 L655.7 65.5 L647.3 68.0 L640.7 66.3 L637.3 65.5 L634.0 68.8 L629.8 68.0 L632.3 70.5 L634.8 73.0 L635.7 76.3 L632.3 79.7 L627.3 83.8 L624.8 85.5 L623.2 81.3 L623.2 76.3 L625.7 73.8 L627.3 70.5 L624.0 71.3 L620.7 69.7 L615.7 71.3 L612.3 70.5 L605.7 71.3 L599.0 72.2 L594.0 75.5 L588.2 78.8 L590.7 81.3 L596.5 80.5 L597.3 84.7 L596.5 89.7 L594.0 93.0 L589.0 96.3 L584.0 98.8 L581.5 99.7 L584.0 95.5 L586.5 91.3 L580.7 90.5 L574.8 88.0 L571.5 83.8 L566.5 81.3 L560.7 83.0 L554.8 89.7 L549.0 87.7 L540.7 87.2 L532.3 86.3 L525.7 84.7 L522.3 85.5 L514.0 86.3 L505.7 89.3 L504.0 90.0 L500.7 88.8 L495.7 86.3 L489.0 83.8 L484.8 80.5 L477.3 81.3 L473.2 78.8 L465.7 80.5 L457.3 81.3 L454.0 85.5 L445.7 84.7 L436.5 85.5 L433.2 89.7 L433.2 93.8 L434.8 98.8 L436.5 103.8 L434.0 103.0 L429.0 100.5 L424.8 99.8 L421.0 97.2 L416.9 93.8 L417.9 92.2 L420.4 90.7 L421.0 88.2 L416.0 87.2 L411.6 85.4 L408.5 84.1 L406.8 81.0 L405.1 78.5 L402.2 77.9 L398.8 75.1 L398.9 73.0 L398.5 71.3 L401.9 68.4 L406.1 65.1 L403.5 60.9 L400.9 56.2 L401.9 53.6Z"/>
<path fill="#5aab5a" stroke-width="1.09" d="M389.8 77.6 L391.6 77.2 L391.9 78.5 L390.1 78.8Z"/>
<path fill="#5aab5a" stroke-width="1.14" d="M441.5 49.7 L447.3 44.7 L455.7 42.2 L465.7 40.5 L471.5 40.0 L465.7 42.2 L457.3 43.8 L450.7 46.3 L445.7 50.5Z M513.2 35.5 L520.7 34.3 L525.7 36.0 L519.0 36.7Z M527.3 36.7 L534.0 36.0 L536.0 37.7 L529.0 38.7Z M539.0 41.3 L545.7 40.5 L549.8 42.7 L544.0 43.3 L539.0 43.0Z M589.8 42.7 L595.7 41.3 L604.8 42.7 L600.7 44.3 L594.0 44.3Z M599.0 80.9 L600.7 80.1 L601.9 82.2 L602.3 85.5 L604.0 88.8 L602.2 89.7 L602.5 93.0 L600.7 94.8 L599.7 91.3 L599.4 87.2 L599.0 83.8Z"/>
<path fill="#c7e3c8" d="M433.2 89.7 L436.5 85.5 L445.7 84.7 L454.0 85.5 L457.3 81.3 L465.7 80.5 L473.2 78.8 L477.3 81.3 L484.8 80.5 L489.0 83.8 L495.7 86.3 L500.7 88.8 L504.0 90.0 L497.8 93.0 L495.2 96.8 L490.2 98.6 L485.2 99.2 L474.0 100.5 L469.0 101.8 L465.2 98.6 L457.8 96.8 L452.8 94.9 L449.0 96.8 L448.4 99.9 L444.6 98.6 L443.4 94.9 L441.5 93.0 L434.6 94.2Z"/>
<path fill="#5aab5a" d="M398.5 105.1 L403.5 103.5 L411.0 102.2 L418.5 102.9 L424.1 103.2 L424.0 103.0 L428.4 104.2 L430.2 108.0 L425.9 109.9 L420.2 109.2 L421.0 109.8 L414.8 110.4 L406.0 111.0 L400.4 109.8 L397.9 107.2Z"/>
<path fill="#5aab5a" stroke-width="1.14" d="M396.0 103.5 L398.5 102.9 L399.2 104.2 L396.6 104.9Z"/>
<path fill="#9bd19b" stroke-width="1.18" d="M407.8 113.6 L410.5 112.8 L410.9 114.0 L408.2 114.6Z"/>
<path fill="#c7e3c8" stroke-width="1.23" d="M422.8 101.1 L429.0 100.5 L434.0 103.0 L436.5 104.9 L437.1 107.4 L435.2 108.6 L431.5 108.0 L430.2 108.0 L428.4 104.2 L424.0 103.0Z"/>
<path fill="#c7e3c8" d="M414.6 110.2 L420.2 109.2 L425.9 109.9 L424.6 113.6 L419.0 116.8 L415.2 116.1 L414.2 113.0Z"/>
<path fill="#c7e3c8" d="M414.2 116.1 L419.0 116.8 L422.8 120.5 L419.0 121.1 L414.0 123.0 L413.4 119.9Z"/>
<path fill="#9bd19b" stroke-width="1.23" d="M412.1 115.5 L414.2 115.5 L413.8 119.9 L414.0 123.0 L412.5 119.9Z"/>
<path fill="#c7e3c8" d="M425.9 109.9 L430.9 111.1 L432.8 115.5 L435.2 119.2 L436.5 123.0 L434.6 124.0 L427.8 122.4 L422.8 120.5 L419.0 116.8 L424.6 113.6Z"/>
<path fill="#5aab5a" d="M414.0 123.0 L419.0 121.1 L422.8 120.5 L427.8 122.4 L434.6 124.0 L436.2 126.5 L437.8 129.5 L440.2 133.2 L443.0 135.0 L447.1 137.0 L445.9 139.9 L441.5 141.8 L436.5 142.4 L431.5 144.9 L426.5 145.5 L424.6 141.8 L420.9 136.8 L417.8 131.8 L414.6 126.8Z"/>
<path fill="#c7e3c8" stroke-width="1.14" d="M436.5 123.0 L438.4 124.5 L436.5 126.1 L434.6 124.0Z"/>
<path fill="#c7e3c8" d="M426.5 145.5 L431.5 144.9 L436.5 142.4 L441.5 141.8 L443.4 144.9 L436.5 148.0 L431.5 150.5 L427.1 151.8 L425.9 148.0Z"/>
<path fill="#c7e3c8" d="M447.1 136.8 L449.0 133.0 L450.9 131.8 L455.2 136.1 L451.5 140.5 L447.8 143.0 L443.4 144.9 L441.5 141.8 L445.9 139.9Z"/>
<path fill="#9bd19b" stroke-width="1.14" d="M443.0 135.0 L445.5 134.5 L449.2 133.0 L447.1 137.0Z"/>
<path fill="#9bd19b" stroke-width="1.1" d="M441.2 131.5 L442.5 131.1 L442.8 133.6 L441.5 133.6Z"/>
<path fill="#5aab5a" d="M430.2 108.0 L431.5 108.0 L435.2 108.6 L439.0 109.2 L443.4 109.9 L445.2 110.5 L451.5 108.6 L455.9 111.1 L457.8 115.5 L457.1 120.5 L460.2 123.6 L461.5 127.4 L459.0 129.9 L454.0 128.6 L450.2 129.2 L447.1 129.5 L442.8 127.5 L439.6 124.2 L436.8 121.8 L435.2 119.2 L432.8 115.5 L430.9 111.1Z"/>
<path fill="#f3faf2" d="M445.2 106.8 L446.5 103.0 L451.5 101.8 L457.8 104.9 L462.8 108.6 L467.1 109.2 L464.0 111.8 L458.4 113.0 L455.9 111.1 L451.5 108.6 L445.2 110.5 L443.4 109.9Z"/>
<path fill="#c7e3c8" d="M448.4 99.9 L449.0 96.8 L452.8 94.9 L457.8 96.8 L465.2 98.6 L469.0 101.8 L474.0 100.5 L476.5 103.0 L472.8 104.9 L469.0 106.1 L467.1 109.2 L462.8 108.6 L457.8 104.9 L451.5 101.8 L446.5 103.0Z"/>
<path fill="#c7e3c8" stroke-width="1.23" d="M474.0 100.5 L485.2 99.2 L486.5 101.8 L480.2 103.6 L476.5 103.0Z"/>
<path fill="#f3faf2" stroke-width="1.23" d="M469.0 106.1 L472.8 104.9 L476.5 103.6 L481.5 106.1 L479.0 108.6 L472.8 108.6 L470.2 108.0Z"/>
<path fill="#f3faf2" d="M457.8 115.5 L458.4 113.0 L464.0 111.8 L467.1 109.2 L472.8 108.6 L479.0 108.6 L475.2 111.1 L474.0 114.9 L470.2 116.8 L467.8 120.5 L464.0 122.4 L459.0 123.0 L457.1 120.5Z"/>
<path fill="#5aab5a" d="M460.2 123.6 L459.0 123.0 L464.0 122.4 L467.8 120.5 L470.2 116.8 L474.0 114.9 L475.2 111.1 L479.0 108.6 L482.8 110.5 L485.2 113.0 L480.2 114.2 L482.1 119.2 L479.0 123.0 L475.2 125.5 L472.8 128.0 L474.0 131.8 L470.9 133.0 L467.8 130.5 L461.5 130.5 L459.0 129.9 L461.5 127.4Z"/>
<path fill="#5aab5a" d="M485.2 109.2 L485.2 113.0 L489.0 115.5 L487.8 119.2 L491.5 123.6 L497.8 126.1 L505.2 127.4 L509.0 128.0 L515.2 126.1 L519.6 125.5 L520.9 127.4 L517.8 131.1 L515.2 134.9 L513.4 133.0 L511.5 133.6 L510.2 130.5 L506.5 129.9 L506.5 134.2 L502.8 138.0 L497.8 143.0 L494.0 146.1 L491.5 150.5 L490.9 156.1 L486.5 160.5 L484.0 155.5 L481.5 148.0 L479.0 140.5 L478.4 136.8 L474.0 137.4 L470.9 133.0 L474.0 131.8 L472.8 128.0 L475.2 125.5 L479.0 123.0 L482.1 119.2 L480.2 114.2 L482.8 110.5Z"/>
<path fill="#c7e3c8" stroke-width="1.14" d="M491.5 123.6 L492.8 122.0 L499.0 124.5 L505.2 126.5 L505.2 127.4 L497.8 126.1Z"/>
<path fill="#c7e3c8" stroke-width="1.14" d="M507.8 126.5 L510.9 126.1 L510.9 127.8 L508.0 128.0Z"/>
<path fill="#9bd19b" stroke-width="1.14" d="M506.5 129.9 L510.2 130.5 L511.5 133.6 L509.6 135.8 L506.8 134.5Z"/>
<path fill="#e0f1df" d="M490.9 158.0 L493.4 159.9 L493.4 163.6 L491.5 164.2 L490.0 161.1Z"/>
<path fill="#e0f1df" d="M504.0 90.0 L505.7 89.3 L514.0 86.3 L522.3 85.5 L525.7 84.7 L532.3 86.3 L540.7 87.2 L549.0 87.7 L554.8 89.7 L557.3 92.2 L549.0 96.3 L542.3 99.7 L535.7 101.3 L527.3 100.5 L519.0 98.8 L514.0 95.5 L509.0 92.2Z"/>
<path fill="#1a5319" d="M481.5 107.1 L485.2 103.0 L486.5 101.8 L490.2 98.6 L495.2 96.8 L497.8 93.0 L504.0 90.0 L509.0 92.2 L514.0 95.5 L519.0 98.8 L527.3 100.5 L535.7 101.3 L542.3 99.7 L549.0 96.3 L557.3 92.2 L554.8 89.7 L560.7 83.0 L566.5 81.3 L571.5 83.8 L574.8 88.0 L580.7 90.5 L586.5 91.3 L584.0 95.5 L581.5 99.7 L574.8 101.3 L569.0 103.0 L564.0 103.8 L559.0 107.2 L564.0 109.7 L559.8 113.0 L563.2 118.0 L564.0 123.0 L560.7 128.8 L555.7 133.0 L550.7 135.5 L545.7 137.2 L540.7 138.0 L537.3 135.5 L534.8 134.7 L530.7 135.5 L525.7 133.8 L524.0 129.7 L519.7 125.5 L515.2 124.9 L510.9 126.1 L505.2 126.5 L499.0 124.5 L492.8 122.0 L491.5 119.9 L489.0 115.5 L485.2 113.0 L485.2 109.2Z"/>
<path fill="#1a5319" stroke-width="1.14" d="M540.7 140.9 L543.2 140.1 L544.0 141.3 L541.9 142.3Z"/>
<path fill="#5aab5a" stroke-width="1.14" d="M561.5 133.0 L563.2 130.9 L564.0 131.8 L562.8 135.9 L561.5 135.9Z"/>
<path fill="#4aa052" d="M571.9 108.8 L574.0 107.2 L576.5 107.6 L578.0 110.5 L576.9 113.4 L574.0 114.7 L571.7 114.2 L571.3 111.3Z"/>
<path fill="#5aab5a" stroke-width="1.3" d="M595.7 99.5 L598.0 100.9 L599.6 104.7 L599.2 108.0 L597.5 111.2 L595.0 113.8 L591.5 114.8 L589.0 116.5 L585.7 116.5 L582.1 117.3 L581.2 119.7 L579.4 121.2 L578.0 118.7 L577.6 116.5 L580.7 114.2 L584.0 112.6 L589.0 111.8 L590.8 110.1 L594.0 107.2 L595.2 103.8Z"/>
<path fill="#5aab5a" stroke-width="1.3" d="M598.6 97.2 L600.7 96.3 L604.0 98.0 L605.8 98.0 L605.3 99.8 L602.3 101.0 L599.4 100.5 L597.8 98.8Z"/>
<path fill="#f3faf2" d="M513.2 136.3 L515.7 131.3 L518.2 128.0 L521.5 125.9 L524.0 127.2 L523.6 130.5 L525.2 133.8 L526.9 137.6 L526.9 140.1 L524.4 139.7 L522.3 141.3 L522.8 144.7 L524.4 146.3 L524.8 149.7 L524.4 151.3 L525.7 154.7 L525.2 158.0 L524.4 157.2 L523.6 151.3 L522.8 147.2 L521.5 143.8 L519.0 145.5 L516.9 146.3 L515.7 143.0 L514.0 139.7Z"/>
<path fill="#9bd19b" d="M522.3 141.3 L524.4 139.7 L526.9 140.1 L528.2 142.6 L529.8 143.4 L533.2 143.0 L534.8 145.5 L534.0 148.0 L531.1 149.2 L529.8 151.3 L527.8 151.3 L526.1 152.6 L524.8 149.7 L524.4 146.3 L522.8 144.7Z M524.4 151.3 L526.1 152.6 L526.1 155.1 L525.7 158.0 L526.9 161.3 L526.9 164.2 L525.7 162.2 L525.2 158.0 L525.7 154.7Z"/>
<path fill="#e0f1df" d="M526.9 137.6 L529.4 136.8 L531.9 138.0 L534.0 140.1 L534.8 142.2 L536.5 144.7 L537.8 147.6 L535.7 147.2 L534.8 145.5 L533.2 143.0 L529.8 143.4 L528.2 142.6 L526.9 140.1Z"/>
<path fill="#9bd19b" d="M531.9 138.0 L534.0 135.1 L537.3 135.9 L537.8 138.4 L535.7 140.5 L537.3 143.0 L539.8 145.9 L541.9 148.8 L542.3 152.2 L540.2 154.7 L537.3 155.9 L535.7 158.8 L534.4 158.0 L536.5 155.5 L538.2 153.0 L537.8 147.6 L536.5 144.7 L534.8 142.2 L534.0 140.1Z"/>
<path fill="#c7e3c8" d="M531.1 149.2 L534.0 148.0 L535.7 147.2 L537.8 147.6 L538.2 153.0 L536.5 155.5 L534.0 155.1 L531.5 153.0Z"/>
<path fill="#5aab5a" stroke-width="1.2" d="M526.9 164.2 L529.4 164.7 L531.9 168.0 L532.8 171.3 L530.7 171.3 L528.6 168.0Z M544.8 171.3 L548.2 169.2 L552.3 167.2 L554.4 163.4 L556.9 163.0 L559.0 165.5 L556.9 167.2 L554.0 168.8 L550.7 171.3 L546.5 173.4Z"/>
<path fill="#c7e3c8" stroke-width="1.2" d="M517.3 165.5 L520.7 165.1 L524.0 168.8 L527.3 172.2 L530.7 175.5 L534.8 178.8 L536.5 183.8 L533.2 184.7 L528.2 179.7 L524.0 174.7 L519.8 170.5Z M536.5 185.5 L542.3 185.5 L549.0 187.2 L555.7 188.8 L560.7 189.7 L559.8 191.3 L552.3 190.5 L544.0 188.8 L537.3 188.0Z M541.5 173.0 L544.8 171.3 L546.5 173.4 L550.7 171.3 L554.0 168.8 L556.9 167.2 L558.2 171.3 L556.5 174.7 L554.0 178.8 L549.8 180.5 L546.5 179.7 L543.2 178.0 L541.5 174.7Z M579.0 175.5 L584.0 176.3 L589.0 178.0 L593.2 177.7 L597.7 179.7 L597.7 190.5 L594.0 188.8 L590.7 184.7 L585.7 182.2 L581.5 179.7Z"/>
<path fill="#f3faf2" stroke-width="1.27" d="M559.8 173.8 L564.8 172.2 L569.0 173.0 L564.8 174.7 L563.2 178.0 L565.7 181.3 L563.2 182.2 L561.5 179.7 L559.8 183.0 L558.7 179.7 L560.3 176.3Z M562.3 190.0 L567.3 189.3 L572.3 188.5 L572.0 189.7 L565.7 191.0Z M573.2 172.2 L574.8 171.3 L575.3 175.5 L573.7 176.3Z M572.3 179.3 L577.3 178.3 L577.7 180.0 L573.2 180.7Z"/>
<path fill="#c7e3c8" stroke-width="1.5" d="M561.1 143.0 L564.0 142.2 L564.8 143.8 L563.6 147.2 L562.3 149.7 L565.7 150.5 L568.2 150.9 L569.8 153.0 L567.3 153.8 L564.0 153.0 L561.9 150.9 L560.7 147.2Z M563.2 154.7 L567.3 154.2 L570.7 156.3 L570.2 159.2 L567.3 158.8 L564.4 157.2Z M567.3 160.1 L570.7 159.0 L572.5 161.3 L570.8 164.7 L568.3 163.4Z M555.7 160.1 L560.2 155.5 L560.8 156.2 L556.3 160.7Z"/>
<path fill="#f3faf2" stroke-width="1.14" d="M597.7 179.7 L602.3 181.3 L607.3 183.8 L609.8 187.2 L614.0 191.3 L612.3 193.3 L607.3 191.3 L604.0 188.8 L600.7 190.5 L597.7 190.5Z M610.7 184.7 L615.7 182.7 L617.7 183.8 L614.0 185.5Z"/>
<path fill="#f3faf2" stroke-width="1.14" d="M624.8 187.2 L629.0 188.8 L629.3 189.7 L625.2 188.0Z M630.7 190.0 L634.3 193.0 L634.8 194.2 L631.0 191.0Z M642.3 200.5 L644.0 203.0 L643.3 203.5 L641.8 201.0Z M637.3 210.5 L642.3 213.0 L642.0 213.8 L637.0 211.3Z"/>
<path fill="#276727" d="M549.0 214.7 L551.5 213.0 L557.3 210.5 L562.3 208.0 L564.8 204.7 L568.2 203.8 L569.8 200.5 L574.0 199.7 L577.3 198.0 L579.0 195.5 L583.2 194.7 L586.5 196.0 L589.8 195.5 L588.2 198.8 L591.5 202.2 L595.7 204.7 L598.2 202.2 L599.0 197.2 L600.3 194.3 L602.0 198.0 L603.2 201.3 L606.5 203.8 L607.3 208.0 L611.5 210.5 L614.0 214.7 L617.3 218.0 L619.0 223.0 L618.7 228.0 L616.5 233.0 L614.0 238.0 L611.5 240.5 L607.3 241.3 L604.8 242.2 L600.7 241.7 L597.3 240.5 L594.8 237.2 L592.3 233.0 L590.7 236.3 L588.2 233.0 L584.8 230.5 L579.0 229.7 L572.3 230.5 L567.3 232.2 L562.3 233.8 L557.3 235.5 L554.0 235.5 L552.3 232.2 L553.2 228.0 L550.7 223.0 L549.0 218.8Z"/>
<path fill="#276727" d="M603.7 246.3 L607.3 246.0 L610.3 246.7 L608.7 249.7 L606.5 251.0 L604.8 248.8Z"/>
<path fill="#5aab5a" stroke-width="1.1" d="M652.7 235.0 L655.7 236.7 L658.5 240.0 L662.8 240.8 L661.2 244.3 L657.7 246.3 L655.2 245.0 L656.0 241.7 L653.7 238.3Z M654.8 245.0 L657.3 247.7 L653.2 251.7 L649.3 254.3 L646.0 256.3 L642.8 255.7 L643.7 253.0 L647.7 250.0 L651.2 247.3Z"/>
<path fill="#f3faf2" stroke-width="1.14" d="M638.2 210.5 L640.7 212.2 L642.7 213.8 L640.3 213.0Z M642.0 200.5 L643.7 203.0 L643.0 203.3Z M663.2 203.8 L665.7 203.3 L664.8 204.7Z"/>
<path fill="#1a5319" stroke-width="1.2" d="M71.5 136.0 L73.5 136.0 L73.5 137.2 L71.5 137.2Z M74.6 137.3 L76.4 137.3 L76.4 138.3 L74.6 138.3Z M77.7 139.2 L80.3 139.2 L80.3 140.8 L77.7 140.8Z M46.5 58.4 L54.2 59.2 L48.0 60.6Z"/>
<path fill="#f3faf2" stroke-width="1.0" d="M106.8 190.5 L108.6 190.5 L108.6 191.5 L106.8 191.5Z M48.7 198.1 L50.5 198.1 L50.5 199.1 L48.7 199.1Z M35.8 203.1 L37.2 203.1 L37.2 203.9 L35.8 203.9Z M88.1 204.5 L89.9 204.5 L89.9 205.5 L88.1 205.5Z M43.3 211.3 L44.7 211.3 L44.7 212.1 L43.3 212.1Z"/>
<path fill="#ffffff" d="M434.6 94.2 L441.5 93.0 L443.4 94.9 L439.0 96.8 L440.2 100.5 L443.4 103.0 L445.2 106.8 L443.4 109.9 L439.0 109.2 L437.1 105.5 L435.2 100.5 L433.4 96.8Z"/>
<path fill="#e0f1df" stroke-width="1.0" d="M320.4 124.4 L322.8 124.4 L322.8 125.8 L320.4 125.8Z M318.7 125.3 L320.3 125.3 L320.3 126.3 L318.7 126.3Z M362.2 172.1 L363.8 172.1 L363.8 173.1 L362.2 173.1Z M425.5 195.2 L427.5 195.2 L427.5 196.4 L425.5 196.4Z M427.5 196.2 L428.9 196.2 L428.9 197.0 L427.5 197.0Z M446.8 211.2 L448.6 211.2 L448.6 212.2 L446.8 212.2Z M450.6 209.5 L452.2 209.5 L452.2 210.5 L450.6 210.5Z M447.0 182.7 L448.4 182.7 L448.4 183.5 L447.0 183.5Z M309.1 148.0 L310.9 148.0 L310.9 149.0 L309.1 149.0Z M311.2 150.0 L312.8 150.0 L312.8 151.0 L311.2 151.0Z"/>
<path fill="none" stroke-width="2.4" d="M244.0 41.3 L249.8 44.2 L254.3 49.2 L257.0 54.2 L260.2 60.0 L265.2 65.0 L269.0 67.7"/>
<path fill="none" stroke-width="2.8" d="M325.7 33.0 L319.0 35.0 L314.3 38.3 L315.2 41.7 L311.8 45.8 L302.7 48.3 L301.0 52.5 L296.0 55.0"/>
<path fill="none" stroke-width="1.8" d="M225.7 39.3 L235.7 36.3 L245.7 33.0"/>
<path fill="none" stroke-width="2.2" d="M222.1 245.5 L221.5 251.8 L219.0 256.8 L218.4 261.8 L220.2 267.4 L224.0 270.5 L228.4 271.4 L232.8 272.0"/>
<path fill="none" stroke-width="1.8" d="M360.2 71.3 L359.7 67.4 L364.4 64.7 L370.7 62.1 L373.8 56.9"/>
</g>
<g>
<rect x="28" y="18" width="18" height="54" rx="9" fill="#003f00"/>
<rect x="19" y="36" width="36" height="18" rx="9" fill="#003f00"/>
<rect x="28" y="77" width="18" height="54" rx="9" fill="#003f00"/>
<path d="M37 22.5 L42.3 31.2 L31.7 31.2Z M37 67.8 L42.3 59.3 L31.7 59.3Z M23.4 44.8 L32 39.5 L32 50.1Z M50.8 44.8 L42.3 39.5 L42.3 50.1Z" fill="#fff"/>
<path d="M32 87 H42 M37 82 V92 M32 121.2 H42" stroke="#fff" stroke-width="2" fill="none"/>
<g fill="none" stroke="#c6c6f4" stroke-width="0.7">
<circle cx="37" cy="104" r="7.8" stroke="#b8b8f0" stroke-width="1"/>
<path d="M29.2 104 H44.8 M30.2 100.2 H43.8 M30.2 107.8 H43.8 M37 96.2 V111.8"/>
<ellipse cx="37" cy="104" rx="3.7" ry="7.7"/>
<ellipse cx="37" cy="104" rx="6.4" ry="7.7" stroke="#a8a8ea" stroke-width="0.6"/>
</g>
</g>
</svg>
</div><!--/map-->

  <!-- legend -->
  <div class="abs" style="left:9px;top:392px;width:152px;height:20px;background:linear-gradient(to right,#ffffff 0%,#c3dcc3 25%,#86b686 50%,#3f8c3f 75%,#0c6a0c 90%,#004a00 100%);"></div>
  <div class="abs" style="left:11px;top:392px;font-size:12px;color:#111;">0</div>
  <div class="abs" style="left:100px;top:392px;font-size:12px;color:#111;">80,708</div>

  <div class="abs" style="left:0;top:422px;width:716px;height:1px;background:#d9d9d9;"></div>
  <div class="title" style="left:21px;top:433px;">Report View by <span>Selection</span></div>
  <div class="abs lnk" style="left:624px;top:433px;font-weight:bold;font-size:14px;">Customize</div>

  <!-- table header -->
  <div class="abs" style="left:0;top:458px;width:711px;height:1px;background:#d4d4d4;"></div>
  <div class="abs" style="left:0;top:459px;width:711px;height:38px;background:#f4f4f4;"></div>
  <div class="th" style="left:14px;top:462px;">Total:<br>987</div>
  <div class="th" style="left:95px;top:470px;">Institutions</div>
  <div class="th" style="left:210px;top:470px;">Countries/Regions</div>
  <div class="th" style="left:352px;top:462px;">Web of Science</div><div class="th" style="left:361px;top:478px;">Documents</div>
  <div class="th" style="left:493px;top:470px;color:#5a7fa3;">Cites</div>
  <div class="abs" style="left:531px;top:476px;width:0;height:0;border-left:4px solid transparent;border-right:4px solid transparent;border-top:4px solid #5a7fa3;"></div>
  <div class="th" style="left:591px;top:470px;">Cites/Paper</div>

  <!-- table body -->
  <div id="tb" class="abs" style="left:0;top:514px;width:716px;height:336px;overflow:hidden;">
   <div class="row" style="top:0px;height:70px;"></div>
   <div class="num" style="left:35px;top:24.1px;">959</div>
   <div class="inst" style="top:-0.6px;">INSTITUTE OF<br>GEOLOGY OF<br>THE CZECH<br>ACADEMY OF<br>SCIENCES</div>
   <div class="ctry" style="top:19.2px;">CZECH<br>REPUBLIC</div>
   <div class="num" style="right:255px;top:24.1px;">645</div>
   <div class="num" style="right:145px;top:24.1px;">7,080</div>
   <div class="num" style="right:28px;top:24.1px;">10.98</div>
   <div class="row hl" style="top:69px;height:48px;"></div>
   <div class="num" style="left:35px;top:84.8px;">960</div>
   <div class="inst" style="top:72.7px;">GUILIN<br>UNIVERSITY OF<br>TECHNOLOGY</div>
   <div class="ctry" style="top:79.4px;">CHINA<br>MAINLAND</div>
   <div class="num" style="right:255px;top:84.8px;">722</div>
   <div class="num" style="right:145px;top:84.8px;">7,072</div>
   <div class="num" style="right:28px;top:84.8px;">9.80</div>
   <div class="row" style="top:117px;height:73px;"></div>
   <div class="num" style="left:35px;top:144.8px;">961</div>
   <div class="inst" style="top:119.4px;">VERNADSKY<br>INSTITUTE OF<br>GEOCHEMISTRY<br>&amp; ANALYTICAL<br>CHEMISTRY</div>
   <div class="ctry" style="top:145.9px;">RUSSIA</div>
   <div class="num" style="right:255px;top:144.8px;">963</div>
   <div class="num" style="right:145px;top:144.8px;">7,065</div>
   <div class="num" style="right:28px;top:144.8px;">7.34</div>
   <div class="row" style="top:190px;height:47px;"></div>
   <div class="num" style="left:35px;top:204.8px;">962</div>
   <div class="inst" style="top:192.7px;">SOUTHERN<br>METHODIST<br>UNIVERSITY</div>
   <div class="ctry" style="top:205.9px;">USA</div>
   <div class="num" style="right:255px;top:204.8px;">376</div>
   <div class="num" style="right:145px;top:204.8px;">7,047</div>
   <div class="num" style="right:28px;top:204.8px;">18.74</div>
   <div class="row" style="top:237px;height:47px;"></div>
   <div class="num" style="left:35px;top:251.6px;">963</div>
   <div class="inst" style="top:239.7px;">AUSTRIAN<br>ACADEMY OF<br>SCIENCES</div>
   <div class="ctry" style="top:252.7px;">AUSTRIA</div>
   <div class="num" style="right:255px;top:251.6px;">435</div>
   <div class="num" style="right:145px;top:251.6px;">7,015</div>
   <div class="num" style="right:28px;top:251.6px;">16.13</div>
   <div class="row" style="top:284px;height:32px;"></div>
   <div class="num" style="left:35px;top:292.8px;">964</div>
   <div class="inst" style="top:286.4px;">UNIVERSITY<br>COLLEGE CORK</div>
   <div class="ctry" style="top:293.9px;">IRELAND</div>
   <div class="num" style="right:255px;top:292.8px;">285</div>
   <div class="num" style="right:145px;top:292.8px;">7,007</div>
   <div class="num" style="right:28px;top:292.8px;">24.59</div>
   <!-- vertical scrollbar -->
   <div class="abs" style="left:690px;top:0;width:20px;height:315px;background:#f1f1f1;"></div>
   <div class="abs" style="left:696px;top:8px;width:0;height:0;border-left:5px solid transparent;border-right:5px solid transparent;border-bottom:5px solid #505050;"></div>
   <div class="abs" style="left:696px;top:301px;width:0;height:0;border-left:5px solid transparent;border-right:5px solid transparent;border-top:5px solid #505050;"></div>
   <div class="abs" style="left:692px;top:267px;width:17px;height:20px;background:#c1c1c1;"></div>
   <!-- horizontal scrollbar -->
   <div class="abs" style="left:1px;top:315px;width:689px;height:21px;background:#f1f1f1;"></div>
   <div class="abs" style="left:690px;top:315px;width:21px;height:21px;background:#dcdcdc;"></div>
   <div class="abs" style="left:22px;top:317px;width:529px;height:17px;background:#c1c1c1;"></div>
   <div class="abs" style="left:9px;top:320px;width:0;height:0;border-top:5px solid transparent;border-bottom:5px solid transparent;border-right:5px solid #a3a3a3;"></div>
   <div class="abs" style="left:677px;top:320px;width:0;height:0;border-top:5px solid transparent;border-bottom:5px solid transparent;border-left:5px solid #505050;"></div>
  </div>
 </div>
</div>
<div class="abs" style="right:4px;top:873.7px;font-style:italic;font-size:12px;color:#111;white-space:nowrap;">InCites Essential Science Indicators dataset updated Mar 09, 2023.</div>
</body>
</html>
